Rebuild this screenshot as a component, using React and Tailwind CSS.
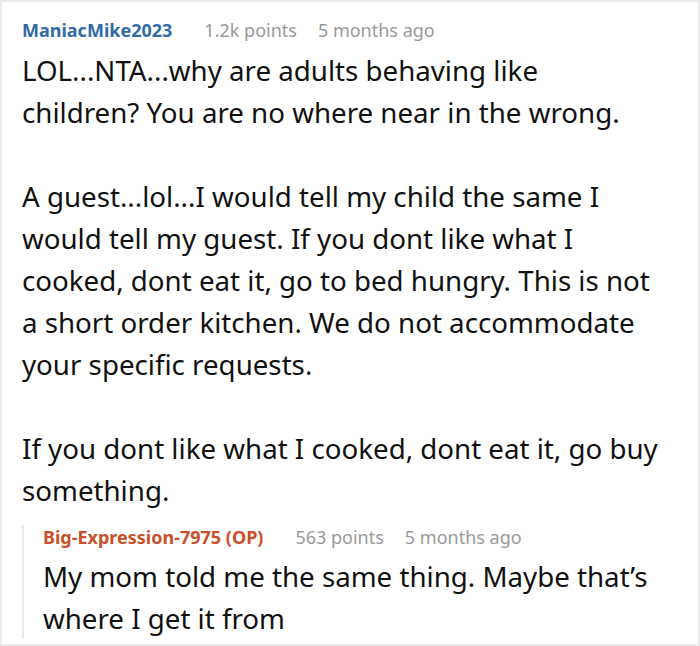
const font = { fontFamily: '"Noto Sans", "Open Sans", sans-serif' };

function Meta({ name, nameColor, points, time, className = '' }) {
  return (
    <div className={`flex items-baseline text-[18px] leading-[24px] ${className}`}>
      <span className={`font-bold ${nameColor}`}>{name}</span>
      <span className="ml-[32px] text-[#999999]">{points}</span>
      <span className="ml-[21px] text-[#999999]">{time}</span>
    </div>
  );
}

export default function App() {
  return (
    <div style={font} className="h-[646px] w-[700px] overflow-hidden border-2 border-[#ececec] bg-white">
      <div className="pl-[20px] pr-[33px] pt-[16px]">
        <Meta name="ManiacMike2023" nameColor="text-[#336aa8]" points="1.2k points" time="5 months ago" />
        <div className="mt-[7px] text-[27.7px] leading-[42px] text-[#111111]">
          <p>
            LOL...NTA...why are adults behaving like
            <br />
            children? You are no where near in the wrong.
          </p>
          <p className="mt-[42px]">
            A guest...lol...I would tell my child the same I would tell my guest. If you dont like what I cooked, dont eat it, go to bed hungry. This is not a short order kitchen. We do not accommodate your specific requests.
          </p>
          <p className="mt-[42px]">If you dont like what I cooked, dont eat it, go buy something.</p>
        </div>
        <div className="mt-[24px] border-l-2 border-[#e8e8e8] pl-[19px]">
          <Meta
            className="-mt-[10px]"
            name="Big-Expression-7975 (OP)"
            nameColor="text-[#c8502a]"
            points="563 points"
            time="5 months ago"
          />
          <p className="-mb-[11px] mt-[6px] text-[27.7px] leading-[42px] text-[#111111]">
            My mom told me the same thing. Maybe that’s where I get it from
          </p>
        </div>
      </div>
    </div>
  );
}
